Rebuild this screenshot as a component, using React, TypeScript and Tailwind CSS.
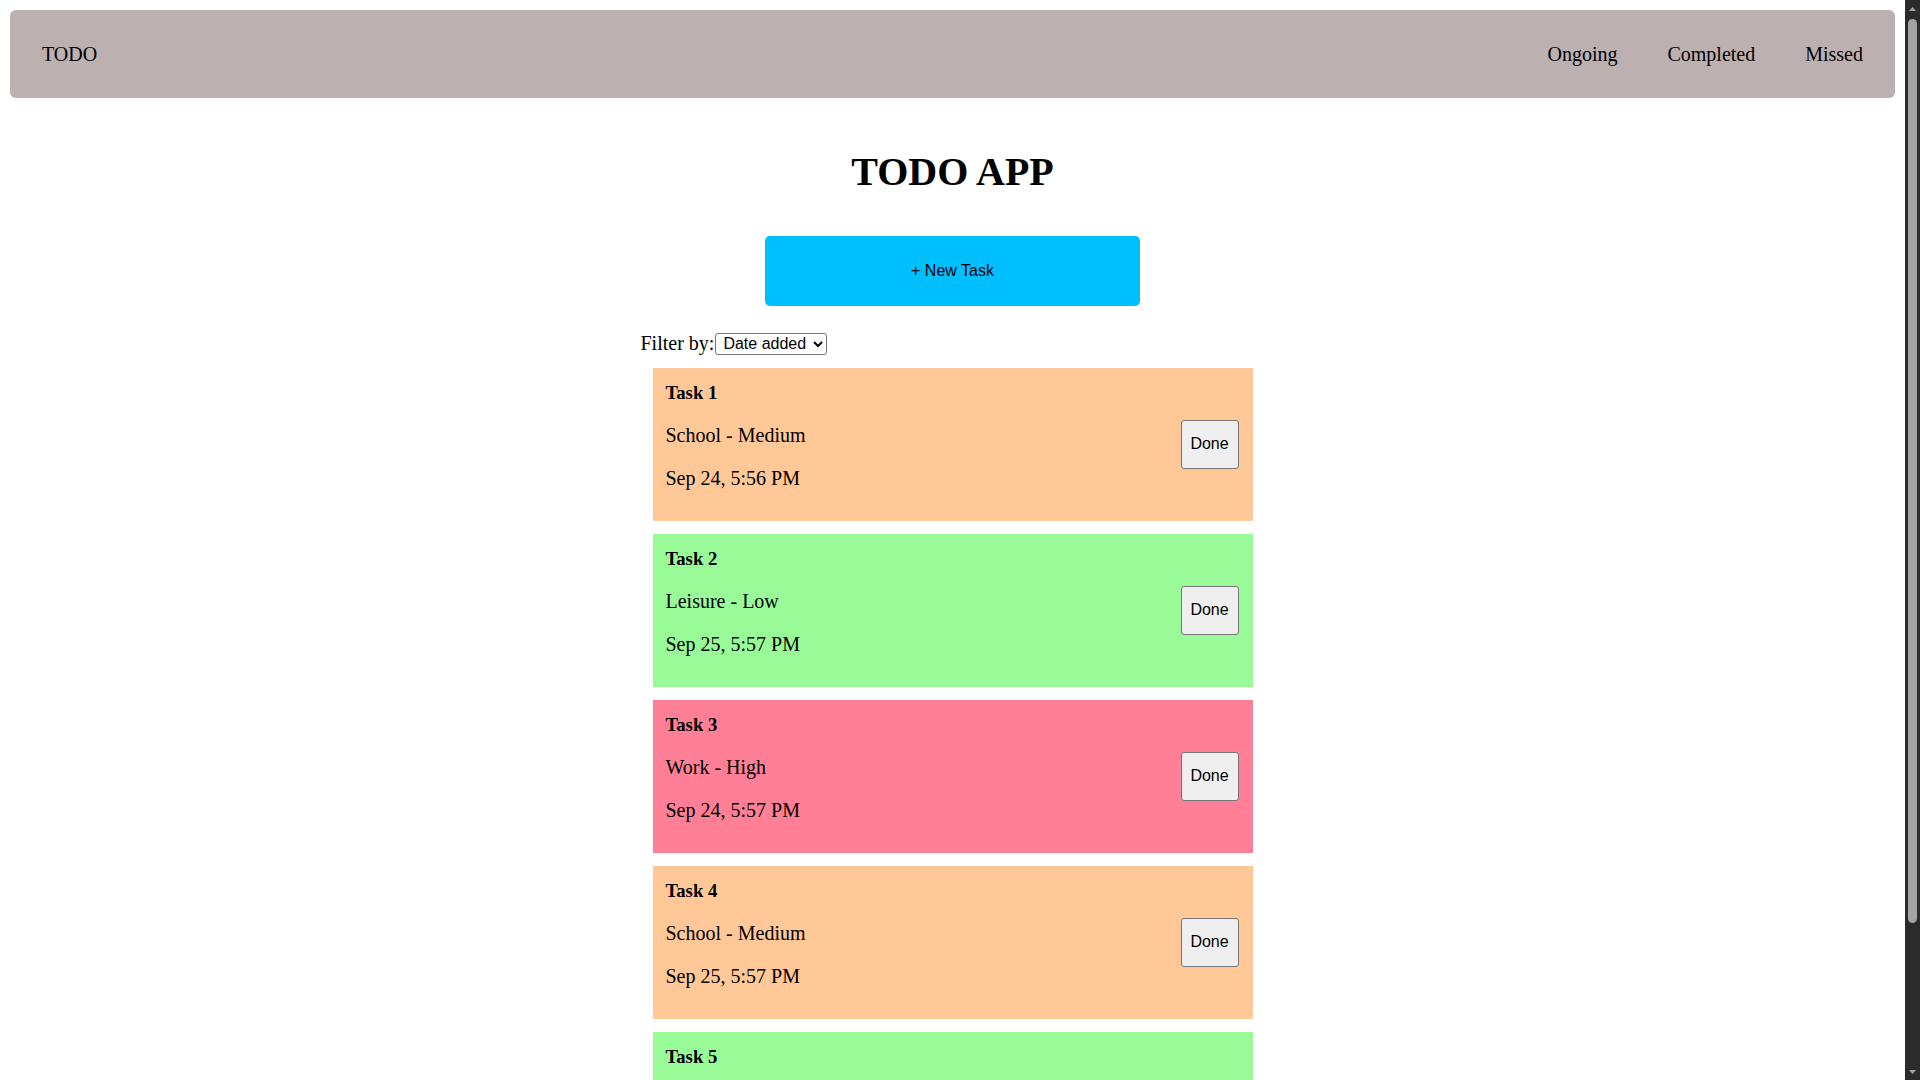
import React from "react";

type Task = { title: string; meta: string; date: string; color: string };

const tasks: Task[] = [
  { title: "Task 1", meta: "School - Medium", date: "Sep 24, 5:56 PM", color: "bg-[#ffc896]" },
  { title: "Task 2", meta: "Leisure - Low", date: "Sep 25, 5:57 PM", color: "bg-[#98fb98]" },
  { title: "Task 3", meta: "Work - High", date: "Sep 24, 5:57 PM", color: "bg-[#ff8096]" },
  { title: "Task 4", meta: "School - Medium", date: "Sep 25, 5:57 PM", color: "bg-[#ffc896]" },
  { title: "Task 5", meta: "Leisure - Low", date: "Sep 25, 5:58 PM", color: "bg-[#98fb98]" },
];

function TaskCard({ t }: { t: Task }) {
  return (
    <div className={`${t.color} flex items-center justify-between`}>
      <div className="flex flex-col pl-[13px] pt-[14.5px] pb-[31px]">
        <h3 className="text-[18.72px] leading-[21.5px] font-bold">{t.title}</h3>
        <p className="mt-[20px] text-[20px] leading-[23px]">{t.meta}</p>
        <p className="mt-[20px] text-[20px] leading-[23px]">{t.date}</p>
      </div>
      <button className="mr-[14px] w-[58px] h-[49px] bg-[#efefef] border border-[#767676] rounded-[3px] text-[16px] leading-[18px] text-black font-['Liberation_Sans',Arial,sans-serif]">
        Done
      </button>
    </div>
  );
}

function FakeScrollbar() {
  return (
    <div className="w-[15px] h-screen shrink-0 bg-[#2b2b2b] flex flex-col items-center">
      <div className="h-[17px] w-full flex items-center justify-center">
        <svg width="9" height="6" viewBox="0 0 9 6">
          <polygon points="4.5,1 8,5 1,5" fill="#a3a3a3" />
        </svg>
      </div>
      <div className="flex-1 w-full px-[3px] pt-[2px] pb-[140px]">
        <div className="h-full w-full rounded-full bg-[#a3a3a3]" />
      </div>
      <div className="h-[17px] w-full flex items-center justify-center">
        <svg width="9" height="6" viewBox="0 0 9 6">
          <polygon points="1,1 8,1 4.5,5" fill="#a3a3a3" />
        </svg>
      </div>
    </div>
  );
}

export default function App() {
  return (
    <div className="h-screen w-full flex overflow-hidden bg-white">
      <div className="flex-1 h-screen overflow-hidden text-black font-['Liberation_Serif','Times_New_Roman',serif]">
        <nav className="mx-[10px] mt-[10px] h-[88px] pb-[1px] rounded-[6px] bg-[#bcb0b0] flex items-center justify-between px-8 text-[20px]">
          <span>TODO</span>
          <div className="flex items-center gap-[50px]">
            <span>Ongoing</span>
            <span>Completed</span>
            <span>Missed</span>
          </div>
        </nav>

        <h1 className="mt-[51px] text-center text-[40px] leading-[46px] font-bold">TODO APP</h1>

        <button className="mx-auto mt-[41px] block w-[375px] h-[70px] rounded-[5px] bg-[#00bfff] text-[16px] text-black font-['Liberation_Sans',Arial,sans-serif]">
          + New Task
        </button>

        <div className="mx-auto w-[624px] pb-[64px]">
          <div className="mt-[26px] flex items-center h-[23px] text-[20px] leading-[23px]">
            <span>Filter by:</span>
            <select
              className="ml-[1px] h-[22px] w-[112px] pl-[3px] border border-[#767676] rounded-[3px] bg-white text-[16px] font-['Liberation_Sans',Arial,sans-serif]"
              defaultValue="date"
            >
              <option value="date">Date added</option>
              <option value="priority">Priority</option>
            </select>
          </div>

          <div className="mx-3 mt-[12.5px] flex flex-col gap-[13px]">
            {tasks.map((t) => (
              <TaskCard key={t.title} t={t} />
            ))}
          </div>
        </div>
      </div>
      <FakeScrollbar />
    </div>
  );
}
